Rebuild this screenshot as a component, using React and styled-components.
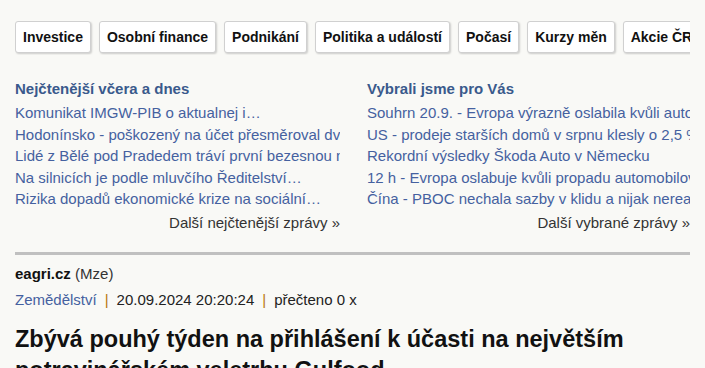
import React from 'react';
import styled, { createGlobalStyle } from 'styled-components';

const GlobalStyle = createGlobalStyle`
  html, body {
    margin: 0;
    padding: 0;
    background: #f9f9f6;
    font-family: "Liberation Sans", Arial, sans-serif;
    color: #222;
  }
`;

const Page = styled.div`
  padding: 21px 15px 0;
  height: 368px;
  box-sizing: border-box;
  overflow: hidden;
`;

const Tabs = styled.nav`
  display: flex;
  gap: 8px;
  overflow: hidden;
  padding-bottom: 2px;
`;

const Tab = styled.a`
  flex: none;
  display: block;
  padding: 7px 7px;
  line-height: 16px;
  font-size: 14px;
  font-weight: bold;
  color: #111;
  background: #fff;
  border: 1px solid #d0d0d0;
  border-radius: 3px;
  box-shadow: 1px 1px 2px rgba(0, 0, 0, 0.18);
  text-decoration: none;
`;

const Columns = styled.div`
  display: grid;
  grid-template-columns: 325px 323px;
  column-gap: 27px;
  margin-top: 24px;
`;

const Column = styled.section`
  min-width: 0;
`;

const Heading = styled.h3`
  margin: 0 0 3px;
  font-size: 15px;
  line-height: 20px;
  color: #3a5a8c;
`;

const LinkItem = styled.a`
  display: block;
  font-size: 15px;
  line-height: 21.5px;
  color: #4561a0;
  white-space: nowrap;
  overflow: hidden;
  text-decoration: none;
`;

const More = styled.a`
  display: block;
  text-align: right;
  margin-top: 3px;
  font-size: 15px;
  line-height: 20px;
  color: #333;
  text-decoration: none;
`;

const Rule = styled.hr`
  margin: 19px 0 0;
  border: none;
  height: 3px;
  background: #c0c0c0;
`;

const Source = styled.div`
  margin-top: 10px;
  font-size: 15px;
  line-height: 18px;
  color: #111;

  b { font-weight: bold; }
  span { color: #333; }
`;

const Meta = styled.div`
  margin-top: 8px;
  font-size: 15px;
  line-height: 18px;
  color: #222;
  display: flex;
  gap: 8px;
`;

const Category = styled.a`
  color: #4561a0;
  text-decoration: none;
`;

const Pipe = styled.span`
  color: #b8760e;
`;

const Title = styled.h1`
  margin: 15px 0 0;
  font-size: 23.5px;
  line-height: 31px;
  font-weight: bold;
  color: #111;
`;

const tabs = ['Investice', 'Osobní finance', 'Podnikání', 'Politika a událostí', 'Počasí', 'Kurzy měn', 'Akcie ČR', 'Komodity'];

const mostRead = [
  'Komunikat IMGW-PIB o aktualnej i…',
  'Hodonínsko - poškozený na účet přesměroval dvě stě tisíc korun',
  'Lidé z Bělé pod Pradedem tráví první bezesnou noc',
  'Na silnicích je podle mluvčího Ředitelství…',
  'Rizika dopadů ekonomické krize na sociální…',
];

const picked = [
  'Souhrn 20.9. - Evropa výrazně oslabila kvůli automobilkám',
  'US - prodeje starších domů v srpnu klesly o 2,5 %',
  'Rekordní výsledky Škoda Auto v Německu',
  '12 h - Evropa oslabuje kvůli propadu automobilového sektoru',
  'Čína - PBOC nechala sazby v klidu a nijak nereagovala',
];

const App = () => {
  return (
    <Page>
      <GlobalStyle />
      <Tabs>
        {tabs.map((t) => (
          <Tab key={t} href="#">{t}</Tab>
        ))}
      </Tabs>

      <Columns>
        <Column>
          <Heading>Nejčtenější včera a dnes</Heading>
          {mostRead.map((l) => (
            <LinkItem key={l} href="#">{l}</LinkItem>
          ))}
          <More href="#">Další nejčtenější zprávy »</More>
        </Column>
        <Column>
          <Heading>Vybrali jsme pro Vás</Heading>
          {picked.map((l) => (
            <LinkItem key={l} href="#">{l}</LinkItem>
          ))}
          <More href="#">Další vybrané zprávy »</More>
        </Column>
      </Columns>

      <Rule />

      <Source>
        <b>eagri.cz</b> <span>(Mze)</span>
      </Source>
      <Meta>
        <Category href="#">Zemědělství</Category>
        <Pipe>|</Pipe>
        <span>20.09.2024 20:20:24</span>
        <Pipe>|</Pipe>
        <span>přečteno 0 x</span>
      </Meta>

      <Title>Zbývá pouhý týden na přihlášení k účasti na největším potravinářském veletrhu Gulfood</Title>
    </Page>
  );
};

export default App;
